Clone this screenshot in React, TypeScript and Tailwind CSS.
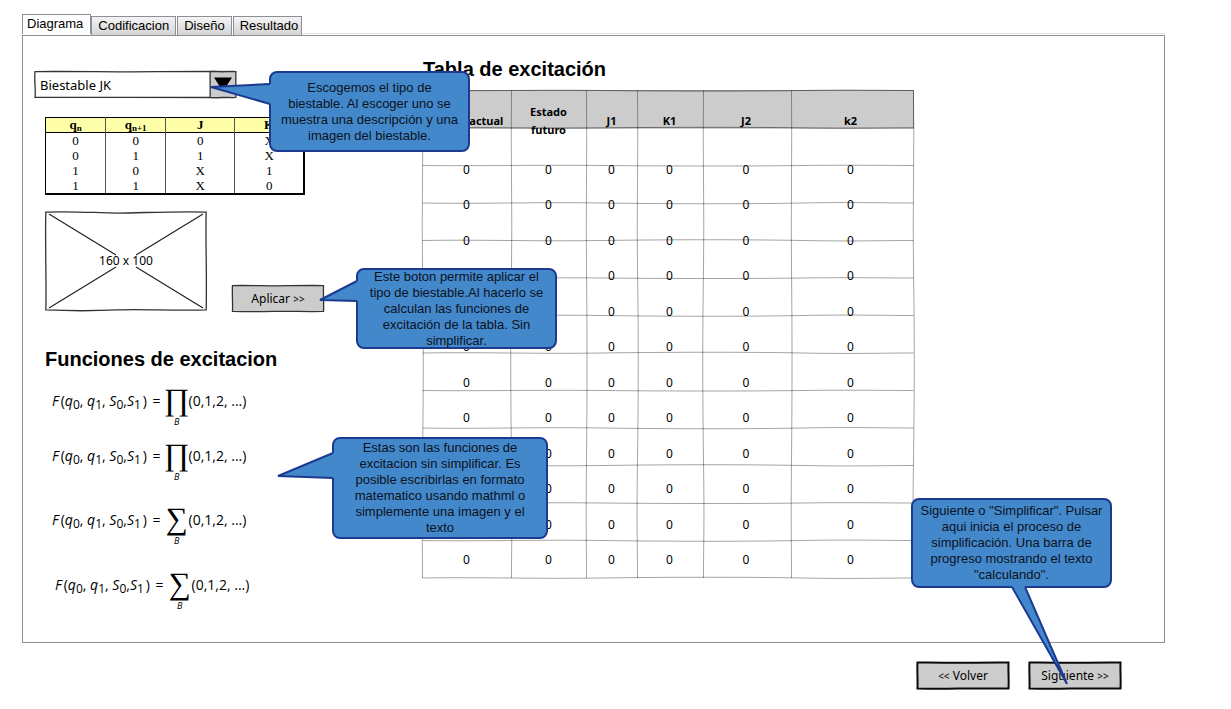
import React from "react";

const SKETCH = 'font-["Noto_Sans",sans-serif]';

type SketchFrameProps = { fill?: string; strong?: boolean };

/** Slightly uneven hand-drawn outline that fills its positioned parent. */
function SketchFrame({ fill = "#ffffff", strong = false }: SketchFrameProps) {
  return (
    <svg
      aria-hidden="true"
      className="pointer-events-none absolute inset-0 h-full w-full overflow-visible"
      viewBox="0 0 100 100"
      preserveAspectRatio="none"
    >
      <path
        d="M0.5 2 C20 1 32 3 45 3 S80 1 99.5 2 C99 30 100 60 99.5 98 C80 99 60 97 45 98 S15 99 0.5 98 C1 70 0 35 0.5 2 Z"
        fill={fill}
        stroke={strong ? "#0a0a0a" : "#333333"}
        strokeWidth={strong ? 2 : 1.3}
        vectorEffect="non-scaling-stroke"
      />
    </svg>
  );
}

type Side = "left" | "bottom";
type CalloutProps = {
  place: string;
  side: Side;
  from: number;
  to: number;
  edge: number;
  tip: [number, number];
  lines: string[];
};

/** Blue speech bubble; tail coordinates are measured from its inner corner. */
function Callout({ place, side, from, to, edge, tip, lines }: CalloutProps) {
  const [tx, ty] = tip;
  const fillPath =
    side === "left"
      ? `M0 ${from} L-2 ${from} L${tx} ${ty} L-2 ${to} L0 ${to} Z`
      : `M${from} ${edge} L${from} ${edge + 2} L${tx} ${ty} L${to} ${edge + 2} L${to} ${edge} Z`;
  const linePath =
    side === "left"
      ? `M-1 ${from} L${tx} ${ty} L-1 ${to}`
      : `M${from} ${edge + 1} L${tx} ${ty} L${to} ${edge + 1}`;
  return (
    <div
      role="note"
      className={`absolute z-10 flex items-center justify-center rounded-lg border-2 border-[#1c3a90] bg-[#4488cc] text-center font-["Liberation_Sans",Arial,sans-serif] text-[13px] leading-4 whitespace-nowrap text-[#0b1220] ${place}`}
    >
      <svg aria-hidden="true" className="absolute top-0 left-0 h-px w-px overflow-visible">
        <path d={fillPath} fill="#4488cc" />
        <path d={linePath} fill="none" stroke="#1c3a90" strokeWidth="2" strokeLinejoin="bevel" />
      </svg>
      <p className="relative">
        {lines.map((line, i) => (
          <React.Fragment key={line}>
            {i > 0 && <br />}
            {line}
          </React.Fragment>
        ))}
      </p>
    </div>
  );
}

function Tabs() {
  const rest = ["Codificacion", "Diseño", "Resultado"];
  return (
    <div role="tablist" className="flex h-[21px] items-end text-[13px] leading-4">
      <button
        role="tab"
        aria-selected="true"
        className="mb-px h-5 border border-b-0 border-[#8c8e98] bg-white pr-[7px] pb-[2px] pl-1"
      >
        Diagrama
      </button>
      <div className="flex gap-px">
        {rest.map((name) => (
          <button
            key={name}
            role="tab"
            aria-selected="false"
            className="h-[19px] border border-b-0 border-[#8c8e98] bg-linear-to-b from-[#f4f4f4] to-[#d4d4d4] px-1.5 last:pr-[3px]"
          >
            {name}
          </button>
        ))}
      </div>
      <span className="mb-px h-px flex-1 bg-[#e4e4e4]" />
    </div>
  );
}

function FlipFlopPicker() {
  return (
    <div className={`relative h-[27px] w-[202px] ${SKETCH}`}>
      <SketchFrame />
      <select
        aria-label="Tipo de biestable"
        className="relative h-full w-full appearance-none bg-transparent pt-[2px] pl-[6px] text-[13px]"
      >
        <option>Biestable JK</option>
      </select>
      <span className="pointer-events-none absolute inset-y-0 right-0 w-[26px]">
        <SketchFrame fill="#cccccc" />
        <svg aria-hidden="true" viewBox="0 0 26 26" className="relative h-full w-full">
          <path d="M4 6 H22 L13 20 Z" fill="#000" />
        </svg>
      </span>
      <Callout
        place="top-0 left-[235px] h-[81px] w-[201px]"
        side="left"
        from={11}
        to={31}
        edge={0}
        tip={[-60, 14]}
        lines={[
          "Escogemos el tipo de",
          "biestable. Al escoger uno se",
          "muestra una descripción y una",
          "imagen del biestable.",
        ]}
      />
    </div>
  );
}

function TruthTable() {
  const rows = [
    ["0", "0", "0", "X"],
    ["0", "1", "1", "X"],
    ["1", "0", "X", "1"],
    ["1", "1", "X", "0"],
  ];
  return (
    <table className='w-[260px] table-fixed border-collapse border border-r-2 border-b-2 border-black text-center font-["Liberation_Serif",serif] text-[13px] leading-[15px]'>
      <colgroup>
        <col className="w-[60px]" />
        <col className="w-[60px]" />
        <col className="w-[69px]" />
        <col className="w-[69px]" />
      </colgroup>
      <thead>
        <tr className="border-b border-black bg-[#ffffaa]">
          <th className="border-r border-[#555] p-0 leading-[14px]">
            q<sub className="text-[9px]">n</sub>
          </th>
          <th className="border-r border-[#555] p-0 leading-[14px]">
            q<sub className="text-[9px]">n+1</sub>
          </th>
          <th className="border-r border-[#555] p-0 leading-[14px]">J</th>
          <th className="p-0 leading-[14px]">K</th>
        </tr>
      </thead>
      <tbody>
        {rows.map((row, r) => (
          <tr key={r}>
            {row.map((v, c) => (
              <td key={c} className="border-r border-[#555] p-0 last:border-r-0">
                {v}
              </td>
            ))}
          </tr>
        ))}
      </tbody>
    </table>
  );
}

function ImagePlaceholder() {
  return (
    <div className={`relative flex h-[102px] w-[162px] items-center justify-center text-xs ${SKETCH}`}>
      <SketchFrame />
      <svg
        aria-hidden="true"
        viewBox="0 0 162 102"
        className="absolute inset-0 h-full w-full"
        fill="none"
        stroke="#222"
        strokeWidth="1.2"
      >
        <path d="M4 4 L71 45 M158 4 L91 45 M4 98 L71 57 M158 98 L91 57" />
      </svg>
      <span className="relative">160 x 100</span>
    </div>
  );
}

function SketchButton({ children, strong }: { children: React.ReactNode; strong?: boolean }) {
  return (
    <button className={`relative h-[27px] w-[92px] pt-px text-xs ${SKETCH}`}>
      <SketchFrame fill="#cccccc" strong={strong} />
      <span className="relative">{children}</span>
    </button>
  );
}

function Chevrons({ children }: { children: string }) {
  return <span className="text-[10px]">{children}</span>;
}

function Formula({ symbol }: { symbol: string }) {
  const v = (name: string, n: number) => (
    <>
      <i>{name}</i>
      <sub className="text-xs">{n}</sub>
    </>
  );
  return (
    <div className='flex h-10 items-center font-["Open_Sans",sans-serif] text-sm leading-5 whitespace-nowrap'>
      <span className="-mt-3">
        <i>F</i>
        <span className="ml-0.5">(</span>
        {v("q", 0)}, {v("q", 1)}, {v("S", 0)},{v("S", 1)}
        <span className="mr-0.5 ml-0.5">)</span> =
      </span>
      <span className="ml-1 flex w-6 flex-col items-center">
        <span className='h-[30px] font-["Liberation_Serif",serif] text-[31px] leading-[26px]'>{symbol}</span>
        <i className="text-[9px] leading-[10px]">B</i>
      </span>
      <span className="-mt-3">(0,1,2, ...)</span>
    </div>
  );
}

const COLS = [0.5, 89.5, 164.5, 215.5, 281.5, 369.5, 491.5];

function SketchGrid() {
  const ys = Array.from({ length: 14 }, (_, i) => 0.5 + i * 37.5);
  const bend = (i: number) => (i % 3 === 0 ? 1 : i % 3 === 1 ? -1 : 0.7);
  return (
    <svg
      aria-hidden="true"
      viewBox="0 0 492 488"
      preserveAspectRatio="none"
      className="absolute inset-0 h-full w-full overflow-visible"
      fill="none"
      stroke="#000"
      strokeOpacity="0.36"
    >
      <rect x="0.5" y="0.5" width="491" height="37.5" fill="#cccccc" />
      {ys.map((y, i) => (
        <path
          key={y}
          d={`M0.5 ${y} C60 ${y + bend(i)} 110 ${y - bend(i)} 180 ${y} S330 ${y + bend(i)} 380 ${y} S460 ${y} 491.5 ${y}`}
        />
      ))}
      {COLS.map((x, i) => (
        <path
          key={x}
          d={`M${x} 0.5 C${x + bend(i)} 60 ${x - bend(i)} 120 ${x} 180 S${x + bend(i)} 300 ${x} 370 S${x} 450 ${x} 488`}
        />
      ))}
    </svg>
  );
}

function ExcitationTable() {
  const heads = ["Estado actual", "Estado futuro", "J1", "K1", "J2", "k2"];
  return (
    <div className="relative w-[492px]">
      <SketchGrid />
      <table className={`relative w-[489px] table-fixed border-collapse text-center text-xs ${SKETCH}`}>
        <colgroup>
          <col className="w-[89px]" />
          <col className="w-[75px]" />
          <col className="w-[51px]" />
          <col className="w-[65px]" />
          <col className="w-[88px]" />
          <col className="w-[121px]" />
        </colgroup>
        <thead>
          <tr className="h-[62px] text-[11px] leading-[18px]">
            {heads.map((h, i) => (
              <th key={h} className={i === 0 ? "p-0 whitespace-nowrap" : "px-3 py-0"}>
                {h}
              </th>
            ))}
          </tr>
        </thead>
        <tbody>
          {Array.from({ length: 12 }, (_, r) => (
            <tr key={r} className="odd:h-[35px] even:h-[36px]">
              {heads.map((h) => (
                <td key={h} className="p-0">
                  0
                </td>
              ))}
            </tr>
          ))}
        </tbody>
      </table>
    </div>
  );
}

export default function App() {
  return (
    <div className='bg-white pt-[14px] pr-[66px] pb-5 pl-[22px] font-["Liberation_Sans",Arial,sans-serif] text-black'>
      <Tabs />
      <main role="tabpanel" className="flex border border-[#8c8e98] pb-[31px]">
        <section className="w-[399px] shrink-0 pt-[35px] pl-[11px]">
          <FlipFlopPicker />
          <div className="pt-[19px] pl-[11px]">
            <TruthTable />
            <div className="mt-[15px] flex items-end gap-[25px]">
              <ImagePlaceholder />
              <div className="relative flex">
                <SketchButton>
                  Aplicar <Chevrons>{">>"}</Chevrons>
                </SketchButton>
                <Callout
                  place="-top-[17px] left-[124px] h-[81px] w-[201px]"
                  side="left"
                  from={11}
                  to={31}
                  edge={0}
                  tip={[-38, 30]}
                  lines={[
                    "Este boton permite aplicar el",
                    "tipo de biestable.Al hacerlo se",
                    "calculan las funciones de",
                    "excitación de la tabla. Sin",
                    "simplificar.",
                  ]}
                />
              </div>
            </div>
            <h2 className="mt-[35px] text-xl leading-6 font-bold">Funciones de excitacion</h2>
            <div className="relative flex flex-col pt-4 pl-[7px]">
              <Formula symbol="∏" />
              <div className="mt-[15px]">
                <Formula symbol="∏" />
              </div>
              <div className="mt-6">
                <Formula symbol="∑" />
              </div>
              <div className="mt-[25px] pl-[3px]">
                <Formula symbol="∑" />
              </div>
              <Callout
                place="top-[66px] left-[287px] h-[102px] w-[216px]"
                side="left"
                from={14}
                to={39}
                edge={0}
                tip={[-56, 37]}
                lines={[
                  "Estas son las funciones de",
                  "excitacion sin simplificar. Es",
                  "posible escribirlas en formato",
                  "matematico usando mathml o",
                  "simplemente una imagen y el",
                  "texto",
                ]}
              />
            </div>
          </div>
        </section>
        <section className="pt-[21px]">
          <h2 className="mb-[9px] pl-px text-xl leading-6 font-bold">Tabla de excitación</h2>
          <ExcitationTable />
        </section>
      </main>
      <footer className="mt-[19px] flex justify-end gap-5 pr-[44px]">
        <SketchButton strong>
          <Chevrons>{"<<"}</Chevrons> Volver
        </SketchButton>
        <div className="relative flex">
          <SketchButton strong>
            Siguiente <Chevrons>{">>"}</Chevrons>
          </SketchButton>
          <Callout
            place="-top-[164px] -left-[118px] h-[90px] w-[201px]"
            side="bottom"
            from={99}
            to={112}
            edge={86}
            tip={[154, 184]}
            lines={[
              'Siguiente o "Simplificar". Pulsar',
              "aqui inicia el proceso de",
              "simplificación. Una barra de",
              "progreso mostrando el texto",
              '"calculando".',
            ]}
          />
        </div>
      </footer>
    </div>
  );
}
